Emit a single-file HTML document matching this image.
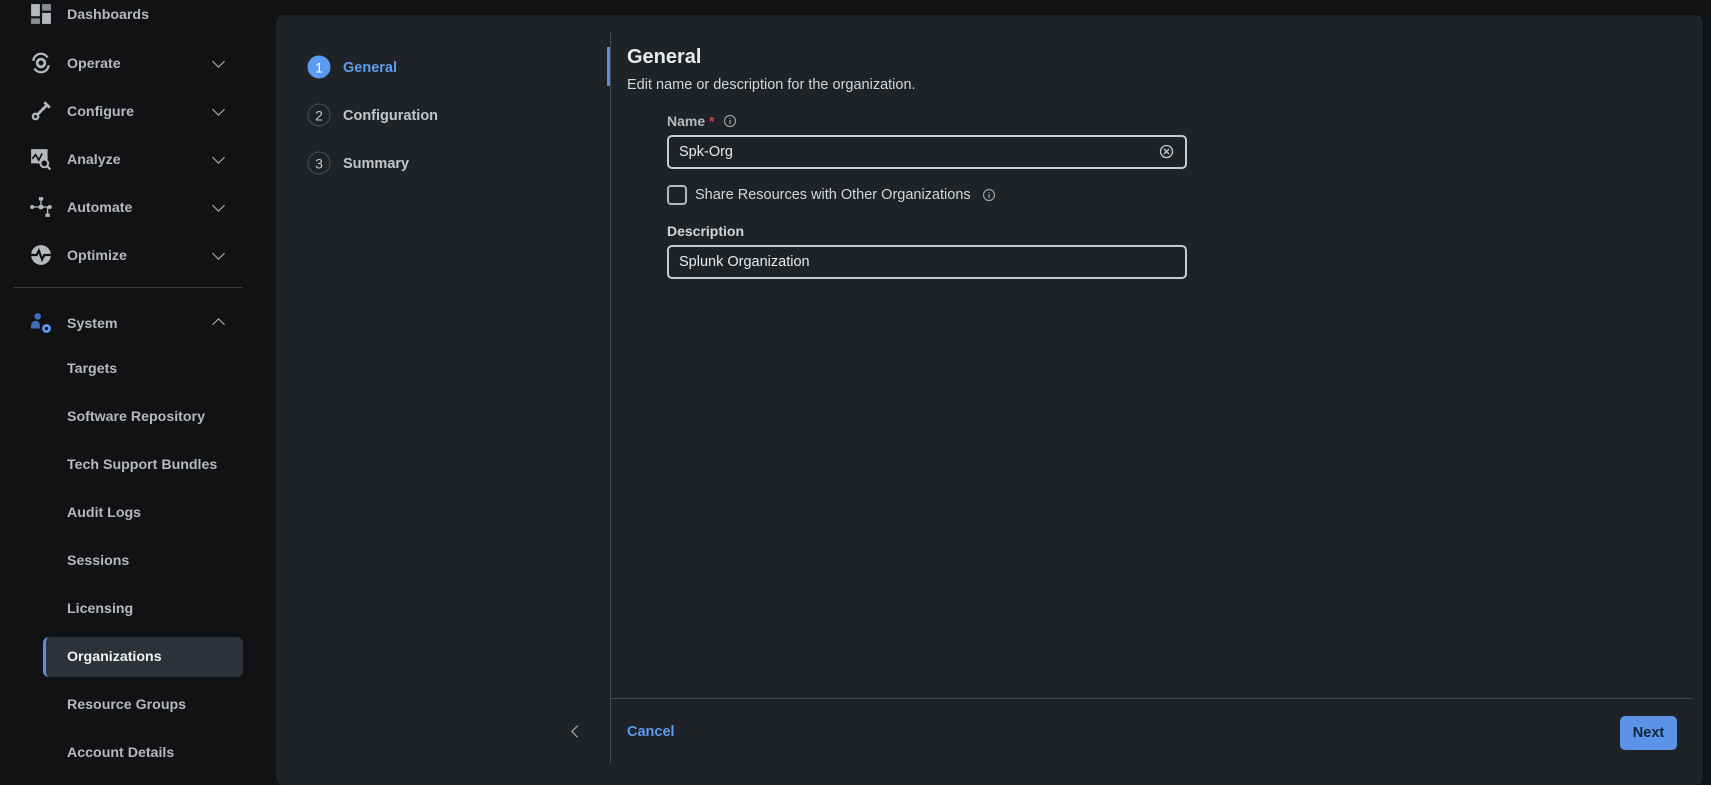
<!DOCTYPE html>
<html><head><meta charset="utf-8"><style>
*{margin:0;padding:0;box-sizing:border-box}
body{width:1711px;height:773px;background:#111214;font-family:"Liberation Sans",sans-serif;overflow:hidden;position:relative;color:#c3c7cd}
.a{position:absolute}
.nav{font-size:14.2px;font-weight:bold;color:#b5b9bf;transform:translateY(-50%);white-space:nowrap;margin-top:1px}
.chev{width:9px;height:9px;border-right:1.5px solid #b5b9bf;border-bottom:1.5px solid #b5b9bf}
.ic{width:22px;height:22px;transform:translate(-50%,-50%)}
.step{width:23px;height:23px;border-radius:50%;border:1.5px solid #4a4f57;color:#c3c7cd;font-size:14px;display:flex;align-items:center;justify-content:center;transform:translate(-50%,-50%)}
.st{font-size:14.5px;font-weight:bold;color:#c3c7cd;transform:translateY(-50%);margin-top:1px}
</style></head><body>
<!-- sidebar -->
<svg class="a ic" style="left:41px;top:14px" viewBox="0 0 20 20"><rect x="1" y="1" width="8" height="11" fill="#b5b9bf"/><rect x="11" y="1" width="8" height="6" fill="#8a8e94"/><rect x="11" y="9" width="8" height="10" fill="#b5b9bf"/><rect x="1" y="14" width="8" height="5" fill="#8a8e94"/></svg>
<div class="a nav" style="left:67px;top:14px">Dashboards</div>
<svg class="a ic" style="left:41px;top:63px" viewBox="0 0 20 20"><path d="M3 8a7 7 0 0 1 13-3M17 12a7 7 0 0 1-13 3" stroke="#b5b9bf" stroke-width="2" fill="none"/><circle cx="10" cy="10" r="3.5" fill="none" stroke="#b5b9bf" stroke-width="2.5"/></svg>
<div class="a nav" style="left:67px;top:63px">Operate</div>
<div class="a chev" style="left:214px;top:57px;transform:rotate(45deg)"></div>
<svg class="a ic" style="left:41px;top:111px" viewBox="0 0 20 20"><path d="M7 13l8-8M13 2l5 5" stroke="#b5b9bf" stroke-width="2.5"/><circle cx="5" cy="15" r="2.5" fill="none" stroke="#b5b9bf" stroke-width="2"/></svg>
<div class="a nav" style="left:67px;top:111px">Configure</div>
<div class="a chev" style="left:214px;top:105px;transform:rotate(45deg)"></div>
<svg class="a ic" style="left:41px;top:159px" viewBox="0 0 20 20"><rect x="1" y="1" width="15" height="13" fill="#b5b9bf"/><path d="M2 10l3-4 3 5 3-6" stroke="#111" stroke-width="1.5" fill="none"/><circle cx="13" cy="14" r="3.5" fill="#111" stroke="#b5b9bf" stroke-width="1.8"/><path d="M15.5 16.5l3 3" stroke="#b5b9bf" stroke-width="2"/></svg>
<div class="a nav" style="left:67px;top:159px">Analyze</div>
<div class="a chev" style="left:214px;top:153px;transform:rotate(45deg)"></div>
<svg class="a ic" style="left:41px;top:207px" viewBox="0 0 20 20"><circle cx="2" cy="10" r="1.8" fill="#b5b9bf"/><circle cx="10" cy="10" r="2.2" fill="#b5b9bf"/><circle cx="18" cy="10" r="1.8" fill="#b5b9bf"/><rect x="8" y="1" width="4" height="3" fill="#b5b9bf"/><rect x="14" y="16" width="4" height="3" fill="#b5b9bf"/><path d="M2 10h16M10 3v7M16 10v7" stroke="#b5b9bf" stroke-width="1.2"/></svg>
<div class="a nav" style="left:67px;top:207px">Automate</div>
<div class="a chev" style="left:214px;top:201px;transform:rotate(45deg)"></div>
<svg class="a ic" style="left:41px;top:255px" viewBox="0 0 20 20"><circle cx="10" cy="10" r="9" fill="#b5b9bf"/><path d="M1 10h5l2-4 3 8 2-4h6" stroke="#111" stroke-width="2" fill="none"/></svg>
<div class="a nav" style="left:67px;top:255px">Optimize</div>
<div class="a chev" style="left:214px;top:249px;transform:rotate(45deg)"></div>
<div class="a" style="left:13px;top:287px;width:230px;height:1px;background:#3a3d42"></div>
<svg class="a ic" style="left:41px;top:323px" viewBox="0 0 20 20"><circle cx="7" cy="4" r="3" fill="#3f6fb8"/><path d="M1 15v-3a4 4 0 0 1 8 0v3z" fill="#3f6fb8"/><circle cx="15" cy="15" r="4" fill="#5b9cf0"/><circle cx="15" cy="15" r="1.5" fill="#111"/></svg>
<div class="a nav" style="left:67px;top:323px">System</div>
<div class="a chev" style="left:214px;top:320px;transform:rotate(-135deg)"></div>
<div class="a nav" style="left:67px;top:368px">Targets</div>
<div class="a nav" style="left:67px;top:416px">Software Repository</div>
<div class="a nav" style="left:67px;top:464px">Tech Support Bundles</div>
<div class="a nav" style="left:67px;top:512px">Audit Logs</div>
<div class="a nav" style="left:67px;top:560px">Sessions</div>
<div class="a nav" style="left:67px;top:608px">Licensing</div>
<div class="a" style="left:43px;top:637px;width:200px;height:40px;background:#2e3238;border-radius:6px;border-left:3px solid #5b8fd8"></div>
<div class="a nav" style="left:67px;top:656px;color:#f0f2f5">Organizations</div>
<div class="a nav" style="left:67px;top:704px">Resource Groups</div>
<div class="a nav" style="left:67px;top:752px">Account Details</div>
<!-- panel -->
<div class="a" style="left:276px;top:15px;width:1427px;height:770px;background:#1f2227;border-radius:8px"></div>
<div class="a" style="left:610px;top:32px;width:1px;height:732px;background:#43474e"></div>
<div class="a" style="left:607px;top:47px;width:3px;height:39px;background:#5b8fd8"></div>
<div class="a step" style="left:319px;top:67px;background:#5b9cf0;border-color:#5b9cf0;color:#fff">1</div>
<div class="a st" style="left:343px;top:67px;color:#5b9cf0">General</div>
<div class="a step" style="left:319px;top:115px">2</div>
<div class="a st" style="left:343px;top:115px">Configuration</div>
<div class="a step" style="left:319px;top:163px">3</div>
<div class="a st" style="left:343px;top:163px">Summary</div>
<div class="a" style="left:573px;top:727px;width:9px;height:9px;border-left:1.5px solid #b5b9bf;border-bottom:1.5px solid #b5b9bf;transform:rotate(45deg)"></div>
<div class="a" style="left:627px;top:46px;font-size:20px;font-weight:bold;color:#e8eaed">General</div>
<div class="a" style="left:627px;top:77px;font-size:14.5px;color:#d3d6da">Edit name or description for the organization.</div>
<div class="a" style="left:667px;top:113px;font-size:14px;font-weight:bold;color:#b5b9bf">Name<span style="color:#d9414f"> *</span></div>
<svg class="a" style="left:723px;top:114px" width="14" height="14" viewBox="0 0 14 14"><circle cx="7" cy="7" r="5.5" fill="none" stroke="#9a9ea4" stroke-width="1.2"/><path d="M7 6v4M7 4v.8" stroke="#9a9ea4" stroke-width="1.3"/></svg>
<div class="a" style="left:667px;top:135px;width:520px;height:34px;border:2px solid #c8ccd1;border-radius:5px;font-size:14.5px;color:#e8eaed;padding:7px 10px">Spk-Org</div>
<svg class="a" style="left:1159px;top:144px" width="15" height="15" viewBox="0 0 15 15"><circle cx="7.5" cy="7.5" r="6" fill="none" stroke="#c8ccd1" stroke-width="1.3"/><path d="M5 5l5 5M10 5l-5 5" stroke="#c8ccd1" stroke-width="1.3"/></svg>
<div class="a" style="left:667px;top:185px;width:20px;height:20px;border:2px solid #b5b9bf;border-radius:4px"></div>
<div class="a" style="left:695px;top:187px;font-size:14.5px;color:#d3d6da">Share Resources with Other Organizations</div>
<svg class="a" style="left:982px;top:188px" width="14" height="14" viewBox="0 0 14 14"><circle cx="7" cy="7" r="5.5" fill="none" stroke="#9a9ea4" stroke-width="1.2"/><path d="M7 6v4M7 4v.8" stroke="#9a9ea4" stroke-width="1.3"/></svg>
<div class="a" style="left:667px;top:223px;font-size:14px;font-weight:bold;color:#d3d6da">Description</div>
<div class="a" style="left:667px;top:245px;width:520px;height:34px;border:2px solid #c8ccd1;border-radius:5px;font-size:14.5px;color:#e8eaed;padding:7px 10px">Splunk Organization</div>
<div class="a" style="left:611px;top:698px;width:1081px;height:1px;background:#43474e"></div>
<div class="a" style="left:627px;top:724px;font-size:14.5px;font-weight:bold;color:#5b9cf0">Cancel</div>
<div class="a" style="left:1620px;top:716px;width:57px;height:34px;background:#5b93e8;border-radius:5px;font-size:14.5px;font-weight:bold;color:#14243d;display:flex;align-items:center;justify-content:center">Next</div>
</body></html>
